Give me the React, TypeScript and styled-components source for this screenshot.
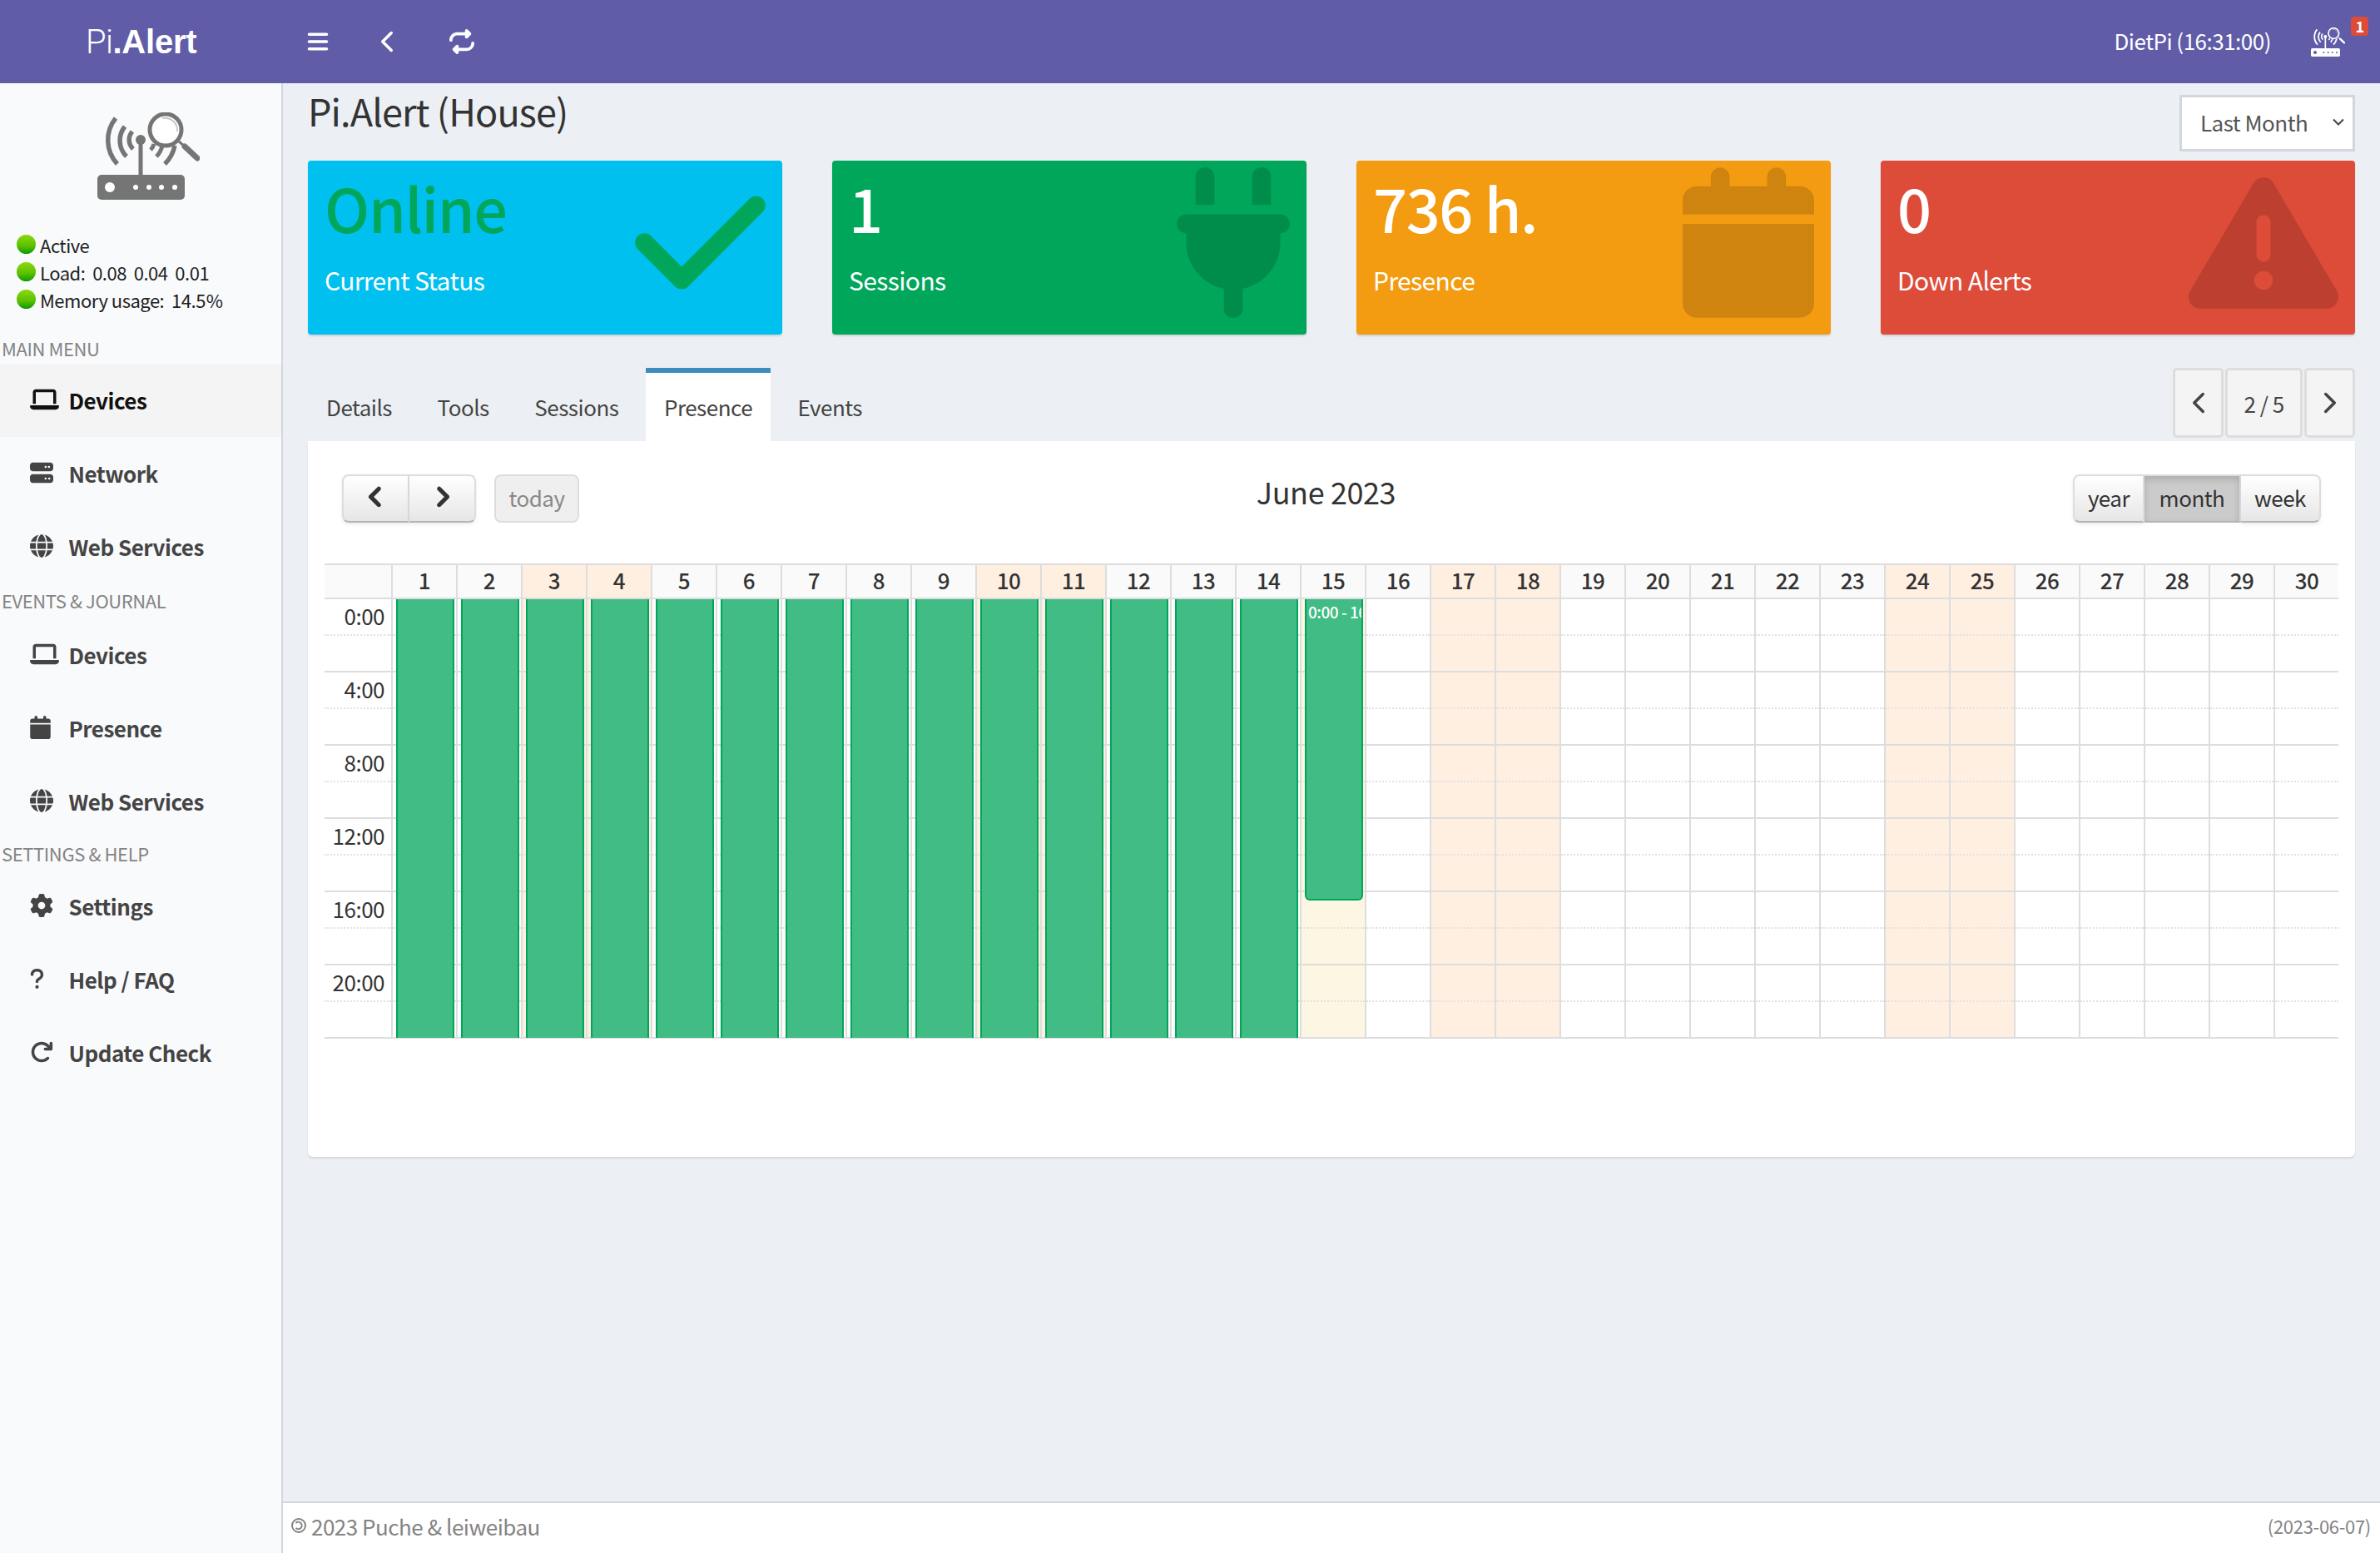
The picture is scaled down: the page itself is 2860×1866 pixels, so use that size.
import styled, { createGlobalStyle } from "styled-components";
import { ChevronLeft, ChevronRight } from "lucide-react";
import {
  FaArrowRotateRight,
  FaBars,
  FaCalendar,
  FaCheck,
  FaChevronLeft,
  FaChevronRight,
  FaGear,
  FaGlobe,
  FaLaptop,
  FaPlug,
  FaQuestion,
  FaRepeat,
  FaServer,
  FaTriangleExclamation,
} from "react-icons/fa6";
import type { ReactNode } from "react";

const FONT = `"Noto Sans CJK SC", "Noto Sans", sans-serif`;

const GlobalStyle = createGlobalStyle`
  html, body {
    margin: 0;
    padding: 0;
    background: #ecf0f5;
  }
  body {
    font-family: ${FONT};
    font-size: 26px;
    letter-spacing: -0.5px;
    color: #333;
  }
  * {
    box-sizing: border-box;
  }
`;

const Page = styled.div`
  width: 2860px;
  height: 1866px;
  display: flex;
  flex-direction: column;
  overflow: hidden;
`;

const TopBar = styled.header`
  height: 100px;
  flex: none;
  display: flex;
  align-items: center;
  background: #605ca8;
  color: #fff;
`;

const Brand = styled.div`
  width: 339px;
  padding-left: 103px;
  font-family: "Liberation Sans", sans-serif;
  font-size: 40px;
  letter-spacing: -0.2px;
  span {
    font-family: Roboto, sans-serif;
    font-weight: 300;
    letter-spacing: -0.6px;
  }
  b {
    font-weight: 700;
  }
`;

const NavIcon = styled.div<{ $width: number }>`
  width: ${({ $width }) => $width}px;
  display: flex;
  justify-content: center;
  svg {
    display: block;
  }
`;

const TopRight = styled.div`
  margin-left: auto;
  padding-right: 42px;
  display: flex;
  align-items: center;
  gap: 48px;
`;

const Clock = styled.span`
  margin-bottom: 2px;
  line-height: 40px;
`;

const AlertLink = styled.div`
  position: relative;
  display: flex;
`;

const AlertBadge = styled.span`
  position: absolute;
  top: -13px;
  right: -28px;
  width: 21px;
  height: 23px;
  border-radius: 4px;
  background: #dd4b39;
  font-size: 18px;
  font-weight: 700;
  line-height: 23px;
  text-align: center;
`;

const Body = styled.div`
  flex: 1;
  min-height: 0;
  display: flex;
`;

const Sidebar = styled.aside`
  width: 340px;
  flex: none;
  background: #f9fafc;
  border-right: 2px solid #d2d6de;
`;

const SideLogo = styled.div`
  height: 175px;
  padding: 35px 0 0 117px;
  svg {
    display: block;
  }
`;

const StatusList = styled.div`
  height: 126px;
  padding: 2px 0 0 20px;
`;

const StatusRow = styled.div`
  height: 33px;
  display: flex;
  align-items: center;
  gap: 5px;
  font-size: 22px;
  letter-spacing: -0.5px;
  color: #222;
  white-space: pre;
`;

const StatusDot = styled.i`
  width: 23px;
  height: 23px;
  border-radius: 50%;
  background: linear-gradient(#8ed80a, #59c000 60%, #0b9a00);
`;

const MenuLabel = styled.div<{ $height: number }>`
  height: ${({ $height }) => $height}px;
  padding: 0 0 2px 2px;
  display: flex;
  align-items: center;
  font-size: 22px;
  letter-spacing: -0.4px;
  color: #848484;
  text-transform: uppercase;
`;

const MenuItem = styled.div<{ $active?: boolean }>`
  height: 88px;
  padding: 0 0 2px 36px;
  display: flex;
  align-items: center;
  background: ${({ $active }) => ($active ? "#f4f4f5" : "transparent")};
  color: ${({ $active }) => ($active ? "#111" : "#444")};
  font-weight: 600;
`;

const MenuIcon = styled.span<{ $width: number }>`
  width: 46.5px;
  display: flex;
  svg {
    height: 28px;
    width: ${({ $width }) => $width}px;
  }
`;

const Main = styled.main`
  flex: 1;
  min-width: 0;
  display: flex;
  flex-direction: column;
`;

const Content = styled.div`
  flex: 1;
  padding: 0 30px;
`;

const TitleRow = styled.div`
  height: 93px;
  display: flex;
  justify-content: space-between;
  align-items: flex-start;
`;

const Title = styled.h1`
  margin: 3px 0 0;
  font-size: 45px;
  font-weight: 400;
  letter-spacing: -0.9px;
  line-height: 60px;
`;

const RangeSelect = styled.div`
  width: 211px;
  height: 68px;
  margin-top: 14px;
  padding: 0 10px 3px 22px;
  display: flex;
  align-items: center;
  justify-content: space-between;
  background: #fff;
  border: 3px solid #d2d6de;
  color: #555;
`;

const InfoRow = styled.div`
  display: flex;
  gap: 60px;
  margin-bottom: 40px;
`;

const InfoBox = styled.div<{ $color: string }>`
  width: 570px;
  height: 209px;
  padding: 18px 20px 0 20px;
  display: flex;
  justify-content: space-between;
  background: ${({ $color }) => $color};
  border-radius: 4px;
  box-shadow: 0 2px 2px rgba(0, 0, 0, 0.12);
  color: #fff;
`;

const InfoValue = styled.div<{ $color?: string }>`
  font-size: 72px;
  font-weight: 500;
  letter-spacing: -1.4px;
  line-height: 76px;
  color: ${({ $color }) => $color ?? "#fff"};
`;

const InfoText = styled.div`
  margin-top: 29px;
  font-size: 30px;
  letter-spacing: -0.6px;
  line-height: 40px;
`;

const InfoIcon = styled.div<{ $width: number; $height: number; $color?: string }>`
  align-self: center;
  margin-top: -30px;
  display: flex;
  color: ${({ $color }) => $color ?? "rgba(0, 0, 0, 0.15)"};
  svg {
    height: ${({ $height }) => $height}px;
    width: ${({ $width }) => $width}px;
  }
`;

const TabBar = styled.div`
  height: 88px;
  display: flex;
`;

const Tab = styled.div<{ $active?: boolean }>`
  height: 88px;
  padding: 0 22px 2px;
  margin-right: 10.5px;
  display: flex;
  align-items: center;
  border-top: 6px solid ${({ $active }) => ($active ? "#3c8dbc" : "transparent")};
  background: ${({ $active }) => ($active ? "#fff" : "transparent")};
  color: #444;
`;

const Pager = styled.div`
  margin-left: auto;
  height: 84px;
  display: flex;
  gap: 2px;
`;

const PagerButton = styled.div<{ $width: number }>`
  width: ${({ $width }) => $width}px;
  display: flex;
  align-items: center;
  justify-content: center;
  background: #f4f4f4;
  border: 3px solid #ddd;
  border-radius: 5px;
  color: #444;
`;

const Panel = styled.section`
  height: 860px;
  padding: 40px 20px 0;
  background: #fff;
  border-radius: 0 0 6px 6px;
  box-shadow: 0 2px 2px rgba(0, 0, 0, 0.1);
`;

const Toolbar = styled.div`
  height: 58px;
  padding: 0 21px;
  margin-bottom: 49px;
  display: flex;
  align-items: flex-start;
  justify-content: space-between;
`;

const ButtonGroup = styled.div`
  display: flex;
`;

const LeftTools = styled.div`
  display: flex;
  gap: 22px;
`;

const CalTitle = styled.h2`
  margin: -5px 0 0;
  font-size: 36px;
  font-weight: 400;
  letter-spacing: -0.4px;
  line-height: 50px;
`;

const CalButton = styled.div<{ $width: number; $state?: "on" | "off" }>`
  width: ${({ $width }) => $width}px;
  height: 58px;
  padding-bottom: 4px;
  display: flex;
  align-items: center;
  justify-content: center;
  border: 2px solid #ddd;
  border-bottom-color: ${({ $state }) => ($state === "off" ? "#ddd" : "#b5b5b5")};
  color: ${({ $state }) => ($state === "off" ? "#888" : "#333")};
  background: ${({ $state }) =>
    $state === "on"
      ? "#cbcbcb"
      : $state === "off"
        ? "#efefef"
        : "linear-gradient(#fff, #e6e6e6)"};
  box-shadow: ${({ $state }) =>
    $state === "on"
      ? "inset 0 4px 8px rgba(0, 0, 0, 0.15)"
      : $state === "off"
        ? "none"
        : "0 2px 4px rgba(0, 0, 0, 0.08)"};
  svg {
    stroke: currentColor;
    stroke-width: 36px;
  }
  &:first-child {
    border-radius: 8px 0 0 8px;
  }
  &:last-child {
    border-radius: 0 8px 8px 0;
  }
  &:only-child {
    border-radius: 8px;
  }
  & + & {
    border-left-width: 0;
  }
`;

const GridHead = styled.div`
  height: 43px;
  display: flex;
  border-top: 2px solid #ddd;
  border-bottom: 2px solid #ddd;
  background: #fafafa;
`;

const CornerCell = styled.div`
  width: 82px;
  flex: none;
  border-right: 2px solid #ddd;
`;

const HeadCell = styled.div<{ $weekend: boolean }>`
  flex: 1 1 0;
  border-right: 2px solid #ddd;
  background: ${({ $weekend }) => ($weekend ? "#feefe1" : "transparent")};
  font-weight: 500;
  line-height: 36px;
  text-align: center;
  &:last-child {
    border-right: none;
  }
`;

const GridBody = styled.div`
  display: flex;
`;

const TimeColumn = styled.div`
  width: 82px;
  flex: none;
  border-right: 2px solid #ddd;
`;

const Slot = styled.div`
  height: 44px;
  padding-right: 8px;
  border-bottom: 2px dotted #e2e2e2;
  line-height: 40px;
  text-align: right;
  &:nth-child(even) {
    border-bottom: 2px solid #ddd;
  }
`;

const DayColumn = styled.div<{ $tone: "plain" | "weekend" | "today" }>`
  position: relative;
  flex: 1 1 0;
  border-right: 2px solid #ddd;
  background: ${({ $tone }) =>
    $tone === "weekend" ? "#feefe1" : $tone === "today" ? "#fdf6e3" : "#fff"};
  &:last-child {
    border-right: none;
  }
`;

const EventBlock = styled.div<{ $ended: boolean }>`
  position: absolute;
  top: 0;
  left: 4px;
  right: 2px;
  padding: 0 0 0 2px;
  overflow: hidden;
  background: #41bc84;
  border: 2px solid #00a65a;
  border-top: none;
  border-bottom-width: ${({ $ended }) => ($ended ? "2px" : "0")};
  border-radius: ${({ $ended }) => ($ended ? "0 0 6px 6px" : "0")};
  color: #fff;
  font-size: 19px;
  font-weight: 500;
  letter-spacing: -0.5px;
  line-height: 30px;
  white-space: nowrap;
`;

const Footer = styled.footer`
  height: 62px;
  flex: none;
  padding: 0 11px 6px 10px;
  display: flex;
  align-items: center;
  justify-content: space-between;
  background: #fff;
  border-top: 2px solid #d2d6de;
  color: #848484;
`;

const Copyright = styled.div`
  display: flex;
  align-items: center;
  gap: 6px;
`;

const BuildDate = styled.div`
  font-size: 22px;
  letter-spacing: -0.3px;
`;

type RouterProps = {
  width: number;
  color: string;
  hole: string;
  lens: string;
};

function RouterLogo({ width, color, hole, lens }: RouterProps) {
  return (
    <svg width={width} viewBox="0 0 123 105" fill="none">
      <g stroke={color}>
        <path d="M22 7A42 42 0 0 0 24 62" strokeWidth="5.5" />
        <path d="M33 17A27 27 0 0 0 35 53" strokeWidth="5.5" />
        <path d="M42 23A15 15 0 0 0 43 44" strokeWidth="5.5" />
        <path d="M68 38A15 15 0 0 1 64 45" strokeWidth="5" />
        <path d="M78 40A27 27 0 0 1 71 53" strokeWidth="5" />
        <path d="M93 40A42 42 0 0 1 81 62" strokeWidth="5.5" />
        <path d="M52 33V76" strokeWidth="5" />
      </g>
      <circle cx="52" cy="33" r="6" fill={color} />
      <circle cx="82" cy="21" r="19" fill={lens} stroke={color} strokeWidth="5" />
      <path d="M78 7A15 15 0 0 1 96 23" stroke="#c8c8c8" strokeWidth="2" />
      <path d="M98 35L105 41" stroke={color} strokeWidth="3" />
      <path d="M105 41L120 55" stroke={color} strokeWidth="7" strokeLinecap="round" />
      <rect y="75" width="105" height="30" rx="5" fill={color} />
      <circle cx="15" cy="90" r="6" fill={hole} />
      {[46, 62, 77, 93].map((x) => (
        <circle key={x} cx={x} cy="90" r="3" fill={hole} />
      ))}
    </svg>
  );
}

function CopyleftMark() {
  return (
    <svg width="18" height="18" viewBox="0 0 18 18" fill="none" stroke="#848484" strokeWidth="2">
      <circle cx="9" cy="9" r="8" />
      <path d="M5.5 6A4.2 4.2 0 1 1 5.5 12" />
    </svg>
  );
}

type MenuEntry = {
  label: string;
  icon: ReactNode;
  width: number;
  active?: boolean;
};

const mainMenu: MenuEntry[] = [
  { label: "Devices", icon: <FaLaptop />, width: 35, active: true },
  { label: "Network", icon: <FaServer />, width: 28 },
  { label: "Web Services", icon: <FaGlobe />, width: 28 },
];
const journalMenu: MenuEntry[] = [
  { label: "Devices", icon: <FaLaptop />, width: 35 },
  { label: "Presence", icon: <FaCalendar />, width: 25 },
  { label: "Web Services", icon: <FaGlobe />, width: 28 },
];
const helpMenu: MenuEntry[] = [
  { label: "Settings", icon: <FaGear />, width: 28 },
  { label: "Help / FAQ", icon: <FaQuestion />, width: 17 },
  { label: "Update Check", icon: <FaArrowRotateRight />, width: 28 },
];

const tabs = ["Details", "Tools", "Sessions", "Presence", "Events"];
const weekendDays = [3, 4, 10, 11, 17, 18, 24, 25];
const days = Array.from({ length: 30 }, (_, i) => i + 1);
const slots = Array.from({ length: 12 }, (_, i) => i);
const TODAY = 15;
const HOUR = 22;

function Menu({ items }: { items: MenuEntry[] }) {
  return (
    <>
      {items.map((item) => (
        <MenuItem key={item.label} $active={item.active}>
          <MenuIcon $width={item.width}>{item.icon}</MenuIcon>
          {item.label}
        </MenuItem>
      ))}
    </>
  );
}

function dayTone(day: number) {
  if (day === TODAY) return "today";
  return weekendDays.includes(day) ? "weekend" : "plain";
}

function Calendar() {
  return (
    <div>
      <GridHead>
        <CornerCell />
        {days.map((day) => (
          <HeadCell key={day} $weekend={weekendDays.includes(day)}>
            {day}
          </HeadCell>
        ))}
      </GridHead>
      <GridBody>
        <TimeColumn>
          {slots.map((slot) => (
            <Slot key={slot}>{slot % 2 === 0 ? `${slot * 2}:00` : ""}</Slot>
          ))}
        </TimeColumn>
        {days.map((day) => (
          <DayColumn key={day} $tone={dayTone(day)}>
            {slots.map((slot) => (
              <Slot key={slot} />
            ))}
            {day < TODAY && <EventBlock $ended={false} style={{ height: 24 * HOUR - 1 }} />}
            {day === TODAY && (
              <EventBlock $ended style={{ height: 16.45 * HOUR }}>
                0:00 - 16:31
              </EventBlock>
            )}
          </DayColumn>
        ))}
      </GridBody>
    </div>
  );
}

export default function App() {
  return (
    <Page>
      <GlobalStyle />
      <TopBar>
        <Brand>
          <span>Pi</span>
          <b>.Alert</b>
        </Brand>
        <NavIcon $width={86}>
          <FaBars size={28} />
        </NavIcon>
        <NavIcon $width={80}>
          <ChevronLeft size={42} strokeWidth={2} />
        </NavIcon>
        <NavIcon $width={100}>
          <FaRepeat size={30} />
        </NavIcon>
        <TopRight>
          <Clock>DietPi (16:31:00)</Clock>
          <AlertLink>
            <RouterLogo width={41} color="#fff" hole="#605ca8" lens="#605ca8" />
            <AlertBadge>1</AlertBadge>
          </AlertLink>
        </TopRight>
      </TopBar>
      <Body>
        <Sidebar>
          <SideLogo>
            <RouterLogo width={123} color="#757575" hole="#fff" lens="#fff" />
          </SideLogo>
          <StatusList>
            <StatusRow>
              <StatusDot />
              Active
            </StatusRow>
            <StatusRow>
              <StatusDot />
              {"Load:  0.08  0.04  0.01"}
            </StatusRow>
            <StatusRow>
              <StatusDot />
              {"Memory usage:  14.5\u200a%"}
            </StatusRow>
          </StatusList>
          <MenuLabel $height={36}>Main Menu</MenuLabel>
          <Menu items={mainMenu} />
          <MenuLabel $height={42}>Events &amp; Journal</MenuLabel>
          <Menu items={journalMenu} />
          <MenuLabel $height={38}>Settings &amp; Help</MenuLabel>
          <Menu items={helpMenu} />
        </Sidebar>
        <Main>
          <Content>
            <TitleRow>
              <Title>Pi.Alert (House)</Title>
              <RangeSelect>
                Last Month
                <svg width="14" height="9" viewBox="0 0 14 9" fill="none">
                  <path d="M1 1.5L7 7.5L13 1.5" stroke="#444" strokeWidth="2" />
                </svg>
              </RangeSelect>
            </TitleRow>
            <InfoRow>
              <InfoBox $color="#00c0ef">
                <div>
                  <InfoValue $color="#00a65a">Online</InfoValue>
                  <InfoText>Current Status</InfoText>
                </div>
                <InfoIcon $width={157} $height={179} $color="#00a65a">
                  <FaCheck />
                </InfoIcon>
              </InfoBox>
              <InfoBox $color="#00a65a">
                <div>
                  <InfoValue>1</InfoValue>
                  <InfoText>Sessions</InfoText>
                </div>
                <InfoIcon $width={136} $height={181}>
                  <FaPlug />
                </InfoIcon>
              </InfoBox>
              <InfoBox $color="#f39c12">
                <div>
                  <InfoValue>736 h.</InfoValue>
                  <InfoText>Presence</InfoText>
                </div>
                <InfoIcon $width={158} $height={181}>
                  <FaCalendar />
                </InfoIcon>
              </InfoBox>
              <InfoBox $color="#dd4b39">
                <div>
                  <InfoValue>0</InfoValue>
                  <InfoText>Down Alerts</InfoText>
                </div>
                <InfoIcon $width={180} $height={180}>
                  <FaTriangleExclamation />
                </InfoIcon>
              </InfoBox>
            </InfoRow>
            <TabBar>
              {tabs.map((tab) => (
                <Tab key={tab} $active={tab === "Presence"}>
                  {tab}
                </Tab>
              ))}
              <Pager>
                <PagerButton $width={61}>
                  <ChevronLeft size={42} strokeWidth={2} />
                </PagerButton>
                <PagerButton $width={93}>2 / 5</PagerButton>
                <PagerButton $width={61}>
                  <ChevronRight size={42} strokeWidth={2} />
                </PagerButton>
              </Pager>
            </TabBar>
            <Panel>
              <Toolbar>
                <LeftTools>
                  <ButtonGroup>
                    <CalButton $width={81}>
                      <FaChevronLeft size={26} />
                    </CalButton>
                    <CalButton $width={80}>
                      <FaChevronRight size={26} />
                    </CalButton>
                  </ButtonGroup>
                  <ButtonGroup>
                    <CalButton $width={102} $state="off">
                      today
                    </CalButton>
                  </ButtonGroup>
                </LeftTools>
                <CalTitle>June 2023</CalTitle>
                <ButtonGroup>
                  <CalButton $width={86}>year</CalButton>
                  <CalButton $width={116} $state="on">
                    month
                  </CalButton>
                  <CalButton $width={96}>week</CalButton>
                </ButtonGroup>
              </Toolbar>
              <Calendar />
            </Panel>
          </Content>
          <Footer>
            <Copyright>
              <CopyleftMark />
              2023 Puche &amp; leiweibau
            </Copyright>
            <BuildDate>(2023-06-07)</BuildDate>
          </Footer>
        </Main>
      </Body>
    </Page>
  );
}
